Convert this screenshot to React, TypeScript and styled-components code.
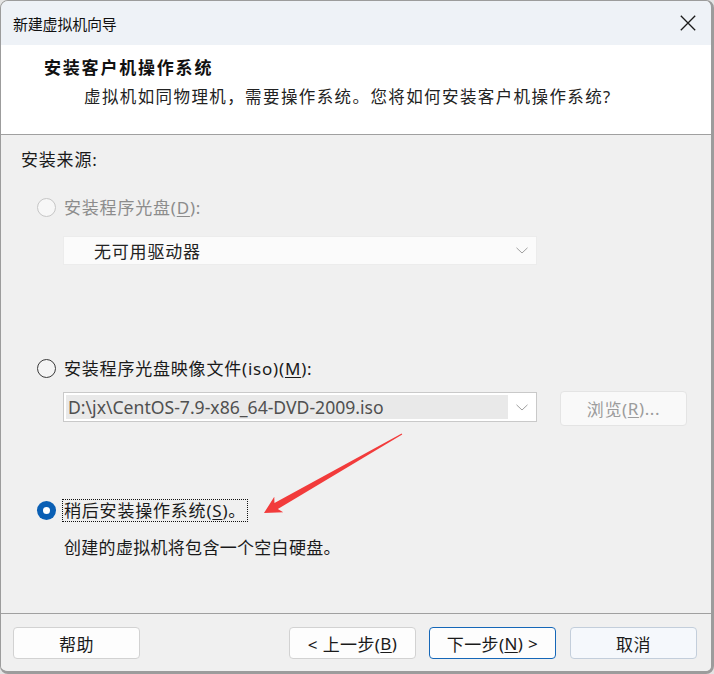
import React from "react";
import styled, { createGlobalStyle } from "styled-components";

const GlobalStyle = createGlobalStyle`
  html, body {
    margin: 0;
    padding: 0;
    background: #e4e4e4;
  }
  body {
    width: 714px;
    height: 674px;
    overflow: hidden;
  }
`;

const CJK = `"Noto Sans", "Noto Sans CJK SC", sans-serif`;

const Window = styled.div`
  position: relative;
  box-sizing: border-box;
  width: 714px;
  height: 674px;
  border-style: solid;
  border-color: #9c9c9c;
  border-width: 1px 3px 3px 1px;
  border-radius: 8px;
  overflow: hidden;
  display: flex;
  flex-direction: column;
  font-family: ${CJK};
  color: #1a1a1a;
`;

const TitleBar = styled.div`
  height: 44px;
  flex: none;
  background: #eef2f7;
  display: flex;
  align-items: center;
  justify-content: space-between;
  padding: 0 15px 0 12px;
`;

const TitleText = styled.div`
  font-size: 15px;
  letter-spacing: -0.2px;
  color: #111;
`;

const CloseIcon = styled.svg`
  width: 16px;
  height: 16px;
  display: block;
`;

const Header = styled.div`
  flex: none;
  box-sizing: border-box;
  height: 90px;
  background: #ffffff;
  border-bottom: 1px solid #a0a0a0;
  padding: 11px 0 0 43px;
`;

const HeaderTitle = styled.div`
  font-size: 17px;
  font-weight: 700;
  line-height: 24px;
  letter-spacing: 1.8px;
  color: #111;
`;

const HeaderSub = styled.div`
  font-size: 16.5px;
  line-height: 24px;
  letter-spacing: 1.4px;
  margin: 5px 0 0 40px;
  color: #222;
`;

const Body = styled.div`
  flex: none;
  box-sizing: border-box;
  height: 479px;
  background: #f0f0f0;
  border-bottom: 1px solid #a0a0a0;
  padding: 13px 0 0 20px;
  display: flex;
  flex-direction: column;
  align-items: flex-start;
`;

const SectionLabel = styled.div`
  font-size: 17px;
  line-height: 24px;
  letter-spacing: 0.8px;
`;

const RadioRow = styled.div<{ $top: number }>`
  display: flex;
  align-items: center;
  height: 24px;
  margin: ${(p) => p.$top}px 0 0 16px;
`;

const RadioCircle = styled.span<{ $state: "disabled" | "off" | "on" }>`
  box-sizing: border-box;
  width: 19px;
  height: 19px;
  border-radius: 50%;
  margin-right: 6px;
  flex: none;
  display: flex;
  align-items: center;
  justify-content: center;
  ${(p) =>
    p.$state === "disabled"
      ? `border: 1px solid #c6c6c6; background: #f7f7f7;`
      : p.$state === "off"
      ? `border: 1.3px solid #3a3a3a; background: #f4f4f4;`
      : `background: #0a5fb4;`}
`;

const RadioDot = styled.span`
  width: 7px;
  height: 7px;
  border-radius: 50%;
  background: #ffffff;
`;

const RadioLabel = styled.span<{ $disabled?: boolean; $focus?: boolean }>`
  font-size: 17px;
  line-height: 21px;
  letter-spacing: 0.8px;
  padding: 0 1px;
  border: 1px ${(p) => (p.$focus ? "dotted #111" : "solid transparent")};
  color: ${(p) => (p.$disabled ? "#8c8c8c" : "#1a1a1a")};
  white-space: nowrap;
`;

const Key = styled.span`
  text-decoration: underline;
  text-underline-offset: 2px;
`;

const Combo = styled.div<{ $disabled?: boolean; $top: number }>`
  box-sizing: border-box;
  width: 474px;
  height: ${(p) => (p.$disabled ? 29 : 30)}px;
  margin-top: ${(p) => p.$top}px;
  margin-left: 42px;
  display: flex;
  align-items: center;
  justify-content: space-between;
  padding: ${(p) => (p.$disabled ? "0 8px 0 30px" : "2px 8px 2px 2px")};
  background: ${(p) => (p.$disabled ? "#fbfbfb" : "#ffffff")};
  border: 1px solid ${(p) => (p.$disabled ? "#ececec" : "#c9c9c9")};
`;

const ComboText = styled.div`
  font-size: 17px;
  letter-spacing: 0.8px;
  color: #222;
`;

const ComboField = styled.div`
  flex: 1;
  height: 100%;
  margin-right: 8px;
  background: #e9e9e9;
  display: flex;
  align-items: center;
  padding-left: 2px;
  font-family: "Noto Sans", sans-serif;
  font-size: 17.6px;
  color: #505050;
`;

const Chevron = styled.svg`
  width: 12px;
  height: 7px;
  display: block;
  flex: none;
`;

const IsoRow = styled.div`
  display: flex;
  align-items: flex-start;
  margin-top: 11px;
`;

const BrowseButton = styled.div`
  box-sizing: border-box;
  width: 127px;
  height: 35px;
  margin-left: 23px;
  border: 1px solid #e4e4e4;
  border-radius: 4px;
  background: #f9f9f9;
  color: #9c9c9c;
  font-size: 17px;
  letter-spacing: 0.6px;
  display: flex;
  align-items: center;
  justify-content: center;
`;

const Description = styled.div`
  font-size: 17px;
  line-height: 24px;
  letter-spacing: 0.3px;
  margin: 14px 0 0 43px;
`;

const Footer = styled.div`
  flex: 1;
  background: #f0f0f0;
  display: flex;
  align-items: flex-start;
  padding: 13px 14px 0 12px;
`;

const Spacer = styled.div`
  flex: 1;
`;

const Button = styled.div<{ $variant?: "default" | "primary" | "hover"; $gap?: number }>`
  box-sizing: border-box;
  width: 127px;
  height: 32px;
  margin-left: ${(p) => p.$gap ?? 0}px;
  border-radius: 4px;
  display: flex;
  align-items: center;
  justify-content: center;
  font-size: 17px;
  letter-spacing: 0.4px;
  color: #1a1a1a;
  ${(p) =>
    p.$variant === "primary"
      ? `border: 1px solid #1567b8; background: #fdfdfd;`
      : p.$variant === "hover"
      ? `border: 1px solid #c3cedb; background: #f5f8fc;`
      : `border: 1px solid #d2d2d2; background: #fdfdfd;`}
`;

const ArrowLayer = styled.svg`
  position: absolute;
  left: -1px;
  top: -1px;
  width: 714px;
  height: 674px;
  pointer-events: none;
`;

const ChevronIcon = () => (
  <Chevron viewBox="0 0 12 7">
    <path d="M0.5 0.8 L6 6 L11.5 0.8" fill="none" stroke="#9f9f9f" strokeWidth="1" />
  </Chevron>
);

export default function App() {
  return (
    <>
      <GlobalStyle />
      <Window>
        <TitleBar>
          <TitleText>新建虚拟机向导</TitleText>
          <CloseIcon viewBox="0 0 16 16">
            <path d="M0.8 0.8 L15.2 15.2 M15.2 0.8 L0.8 15.2" stroke="#1a1a1a" strokeWidth="1.3" fill="none" />
          </CloseIcon>
        </TitleBar>
        <Header>
          <HeaderTitle>安装客户机操作系统</HeaderTitle>
          <HeaderSub>虚拟机如同物理机，需要操作系统。您将如何安装客户机操作系统?</HeaderSub>
        </Header>
        <Body>
          <SectionLabel>安装来源:</SectionLabel>
          <RadioRow $top={23}>
            <RadioCircle $state="disabled" />
            <RadioLabel $disabled>
              安装程序光盘(<Key>D</Key>):
            </RadioLabel>
          </RadioRow>
          <Combo $disabled $top={17}>
            <ComboText>无可用驱动器</ComboText>
            <ChevronIcon />
          </Combo>
          <RadioRow $top={91}>
            <RadioCircle $state="off" />
            <RadioLabel>
              安装程序光盘映像文件(iso)(<Key>M</Key>):
            </RadioLabel>
          </RadioRow>
          <IsoRow>
            <Combo $top={1}>
              <ComboField>D:\jx\CentOS-7.9-x86_64-DVD-2009.iso</ComboField>
              <ChevronIcon />
            </Combo>
            <BrowseButton>
              浏览(<Key>R</Key>)...
            </BrowseButton>
          </IsoRow>
          <RadioRow $top={72}>
            <RadioCircle $state="on">
              <RadioDot />
            </RadioCircle>
            <RadioLabel $focus>
              稍后安装操作系统(<Key>S</Key>)。
            </RadioLabel>
          </RadioRow>
          <Description>创建的虚拟机将包含一个空白硬盘。</Description>
        </Body>
        <Footer>
          <Button>帮助</Button>
          <Spacer />
          <Button>
            &lt; 上一步(<Key>B</Key>)
          </Button>
          <Button $variant="primary" $gap={13}>
            下一步(<Key>N</Key>) &gt;
          </Button>
          <Button $variant="hover" $gap={14}>
            取消
          </Button>
        </Footer>
        <ArrowLayer viewBox="0 0 714 674">
          <g transform="translate(264 513) rotate(-29.8)">
            <polygon
              points="0,0 17,-9 14,-3.4 159,-0.5 159,0.5 14,3.4 17,9"
              fill="#f23b3b"
            />
          </g>
        </ArrowLayer>
      </Window>
    </>
  );
}
